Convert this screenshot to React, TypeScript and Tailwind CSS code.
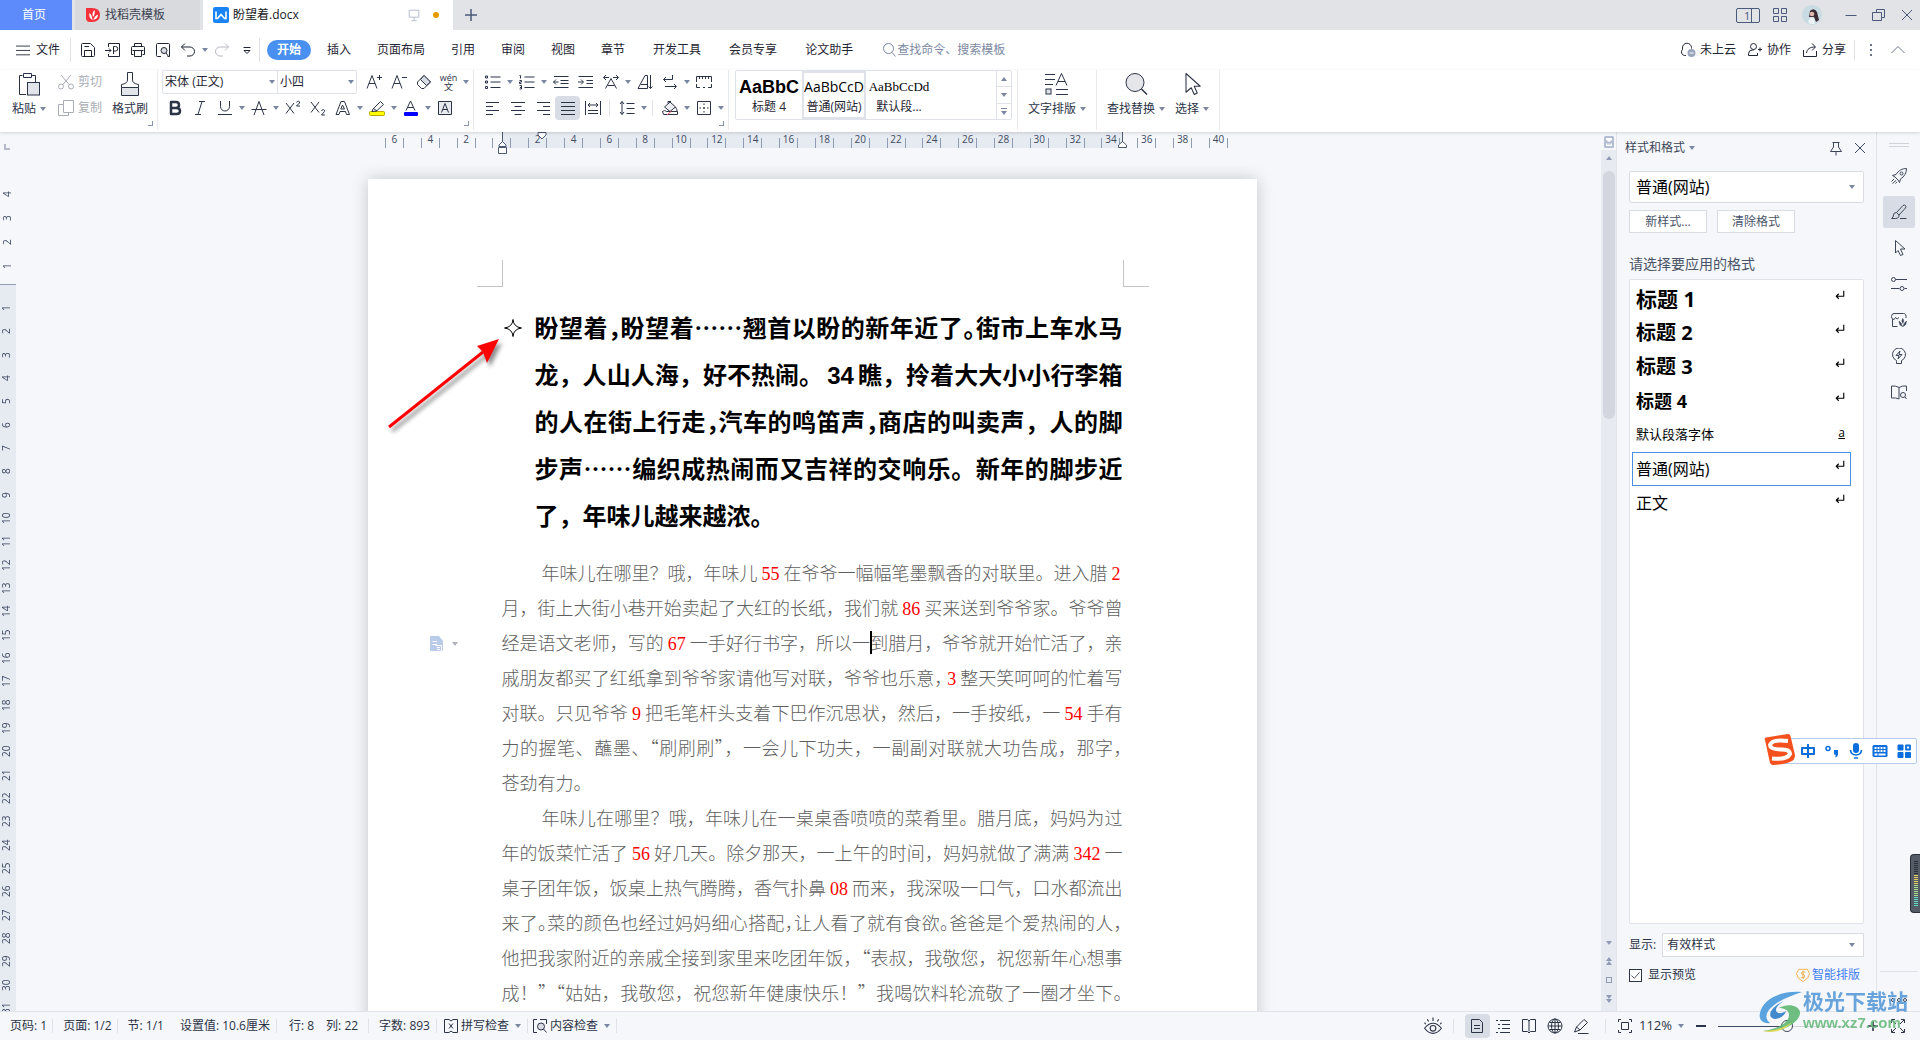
import { Fragment, useState } from 'react';
import type { ReactNode } from 'react';
import clsx from 'clsx';

const UI_FONT = "font-['Open_Sans','Noto_Sans_CJK_SC',sans-serif]";
const CJK_FONT = "font-['Noto_Sans_CJK_SC',sans-serif]";

// ---------------------------------------------------------------- icons

type IconProps = { d?: string; className?: string; children?: ReactNode };

function Icon({ d, className = 'size-4', children }: IconProps) {
  return (
    <svg
      viewBox="0 0 16 16"
      className={clsx('shrink-0', className)}
      fill="none"
      stroke="currentColor"
      strokeLinejoin="round"
      aria-hidden="true"
    >
      {d && <path d={d} />}
      {children}
    </svg>
  );
}

function Caret({ className = 'text-[#7a879f]' }: { className?: string }) {
  return (
    <svg viewBox="0 0 6 4" className={clsx('h-1 w-1.5 shrink-0', className)} fill="currentColor" aria-hidden="true">
      <path d="M0 0h6L3 4z" />
    </svg>
  );
}

const icons = {
  save: <Icon d="M1.500 2.500q0-1 1-1H10.500L14.500 5.500V13.500q0 1-1 1H2.500q-1 0-1-1zM4.500 14.500V8.500H11.500V14.500M4.500 4.500H9" />,
  exportPdf: <Icon d="M3.500 5V1.500H14.500V14.500H3.500V12M0 8.500H6M4 6.500L6 8.500L4 10.500M8.500 12V4.500H10.500a2 2 0 0 1 0 4.500H8.500" />,
  print: <Icon d="M4.500 4.500V1.500H11.500V4.500M3.500 12.500H1.500V5.500q0-1 1-1H13.500q1 0 1 1V12.500H12.500M4.500 8.500H11.500V14.500H4.500zM2.500 8.500H13.500" />,
  preview: (
    <Icon d="M6 14.500H2.500q-1 0-1-1V2.500q0-1 1-1H13.500q1 0 1 1V14.500H12.500">
      <circle cx="9" cy="8.500" r="3" fill="#d9dce2" />
      <path d="M11 11L13.500 14.500" />
    </Icon>
  ),
  undo: <Icon d="M5 1.500L1.500 5L5 8.500M1.500 5H10a4.500 4.500 0 0 1 0 9H7" />,
  redo: <Icon d="M11 1.500L14.500 5L11 8.500M14.500 5H6a4.500 4.500 0 0 0 0 9H9" />,
  customize: <Icon d="M4.500 5.500H11.500M5 8.500H11L8 11.500z" />,
  search: (
    <Icon>
      <circle cx="7.500" cy="6.500" r="5" />
      <path d="M11 10.500L14.500 14.500" />
    </Icon>
  ),
  cloud: (
    <Icon d="M6 13.500H4.500a3.500 3.500 0 0 1-2-6V6a4.500 4.500 0 0 1 9-.5v1">
      <circle cx="11.500" cy="11" r="4" fill="#9aa5bd" stroke="none" />
      <path d="M9.500 11H13.500" stroke="#fff" />
    </Icon>
  ),
  invite: (
    <Icon d="M7 8H5.500a4 4 0 0 0-4 4V13.500H10.500V11M11 7.500H15M13 5.500V9.500">
      <circle cx="6.500" cy="4.500" r="3" />
    </Icon>
  ),
  share: <Icon d="M1.500 8V14.500H14.500V9M4.500 11C5 7 8 5 13 5M10 1.500L13.500 5L10 8.500" />,
  chevronUp: <Icon d="M1.500 11L8 4.500L14.500 11" />,
  eraser: (
    <Icon d="M8 1.500L14.500 8L8 14.500H5.500L1.500 10.500V8z">
      <path d="M4.500 5.500L10.500 11.500L14.500 8L8 1.500z" fill="#d9dce2" />
    </Icon>
  ),
  italic: <Icon d="M7 1.500H13M3 14.500H9M10 1.500L6 14.500" />,
  underline: <Icon d="M3.500 1V6.500a4.500 4.500 0 0 0 9 0V1M1 14.500H15" />,
  strike: <Icon d="M3 15L8 1.500L13 15M0.500 9.500H15.500" />,
  sup: <Icon d="M1 3L9 13.500M9 3L1 13.500M11.500 2.500Q12 1 13.500 1.200Q15 1.500 14.500 3L11.500 6H15" />,
  sub: <Icon d="M1 2L9 12.500M9 2L1 12.500M11.500 11Q12 9.500 13.500 9.700Q15 10 14.500 11.500L11.500 15H15" />,
  outlineA: <Icon d="M1 14.500L6 1.500H9.500L14.500 14.500H11.500L10.500 11.500H5L4 14.500zM7.500 5L5.800 9H9.500z" />,
  highlight: (
    <Icon>
      <rect x="0.500" y="11.500" width="15" height="4" rx="1" fill="#ffff00" stroke="#b8a800" />
      <path d="M4 9L11.500 1.500L14.500 4.500L7.500 11L3 11.500zM4.500 8.500L8 11" fill="#fff" />
    </Icon>
  ),
  fontColor: (
    <Icon d="M3 10.500L7.500 1L12 10.500M4.500 7.500H10.500">
      <rect x="1" y="12" width="14" height="4" rx="1" fill="#0000ff" stroke="none" />
    </Icon>
  ),
  boxedA: (
    <Icon>
      <rect x="1.500" y="1.500" width="13" height="13" fill="#e8eaee" />
      <path d="M4.500 12.500L8 3.500L11.500 12.500M5.500 9.500H10.500" />
    </Icon>
  ),
  bullets: (
    <Icon d="M5.500 3H15.500M5.500 8H15.500M5.500 13.500H15.500">
      <rect x="0.500" y="2" width="2" height="2" />
      <rect x="0.500" y="7" width="2" height="2" />
      <rect x="0.500" y="12.500" width="2" height="2" />
    </Icon>
  ),
  numbers: <Icon d="M5.500 3H15.500M5.500 8H15.500M5.500 13.500H15.500M0.500 1.500H1.500V4.500M0.500 6.500H2.500V8H0.500V9.500H2.500M0.500 11.500H2.500V15H0.500M1 13.500H2.500" />,
  outdent: <Icon d="M1 2.500H15.500M7.500 6.500H15.500M7.500 9.500H15.500M1 13.500H15.500M5.500 8H0.500M3 5.500L0.500 8L3 10.500" />,
  indent: <Icon d="M0.500 2.500H15M8.500 6.500H15M8.500 9.500H15M0.500 13.500H15M0 8H5M3 5.500L5.500 8L3 10.500" />,
  charScale: <Icon d="M0.500 3.500H6M10 3.500H15.500M3 1L0.500 3.500L3 6M13 1L15.500 3.500L13 6M2.500 14.500L8 4.500L13.500 14.500M4.500 11.500H11.500" />,
  sort: <Icon d="M1 14.500L8 1.500H10.500V14.500M4 10.500H10.500M1 14.500H10.500M13.500 1V14.500M11.500 12.500L13.500 14.500L15.500 12.500" />,
  wrap: <Icon d="M10.500 1V5.500H1.500M4 3L1.500 5.500L4 8M3 12.500H14M12 10L14.500 12.500L12 15" />,
  tabStops: <Icon d="M0.500 8V2.500H15.500V8M3.500 2.500V5M6.500 2.500V5M9.500 2.500V5M12.500 2.500V5M0.500 10V13.500H4M7 13.500H9M12 13.500H15.500V10" />,
  alignLeft: <Icon d="M1 2.500H14M1 6.500H8M1 10.500H14M1 14.500H8" />,
  alignCenter: <Icon d="M1 2.500H15M4.500 6.500H11.500M1 10.500H15M4.500 14.500H11.500" />,
  alignRight: <Icon d="M2 2.500H15M8 6.500H15M2 10.500H15M8 14.500H15" />,
  justify: <Icon d="M1 2.500H15M1 6.500H15M1 10.500H15M1 14.500H15" />,
  distribute: <Icon d="M0.500 1V15M15.500 1V15M3 5H13M5 3L3 5L5 7M11 3L13 5L11 7M3 10.500H13M3 13.500H13" />,
  lineSpacing: <Icon d="M3 1.500V14.500M1 4L3 1.500L5 4M1 12L3 14.500L5 12M7.500 3.500H15.500M7.500 8.500H15.500M7.500 13.500H15.500" />,
  fill: (
    <Icon>
      <path d="M2.500 7L8 2L13.500 7L8 11.500z" fill="#eceef2" />
      <path d="M6 3.500V1.500H9M13.500 7Q15.500 10 15 11.500M0.500 11.500Q2.500 9.500 4.500 11.500H15.500V14.500H1.500z" />
      <path d="M5 15L9.500 11" stroke="#e35d5d" />
    </Icon>
  ),
  borders: <Icon d="M1.500 1.500H14.500V14.500H1.500zM8 3.500V5M8 7V9M8 11V12.500M3.500 8H5M7 8H9M11 8H12.500" />,
  pin: <Icon d="M4.500 2.500H11.500M5.500 2.500V7L2.500 11.500H13.500L10.500 7V2.500M8 11.500V15.500" />,
  close: <Icon d="M3 3L13 13M13 3L3 13" />,
  cursor: <Icon d="M4.500 0.500L14 9H9.500L12 14.500L9.500 15.500L7 10.500L4.500 13z" />,
};

const railIcons = [
  {
    label: '快速启动',
    icon: (
      <Icon>
        <path d="M15.500 .5C11 .5 7.500 2.500 5 6.500L1.500 7.500L4 9L7 12L8.500 14.500L9.500 11C13.500 8.500 15.500 5 15.500.5zM3 11L.500 13.500M5 12.500L1.500 15.500M6 14L4.500 15.500" />
        <circle cx="10.500" cy="5.500" r="1.500" />
      </Icon>
    ),
  },
  {
    label: '样式和格式',
    icon: <Icon d="M5.500 8.500L12 1.500Q13.500.500 14.500 1.500T14.500 4L8 11M5.500 8.500L8 11Q8.500 14 4.500 14.500H.500Q2.500 13.500 2.500 11T5.500 8.500zM9 14.500H15.500" />,
  },
  { label: '选择', icon: icons.cursor },
  {
    label: '属性',
    icon: (
      <Icon d="M4.500 3.500H16M0 12.500H8.500M13.500 12.500H16">
        <circle cx="2.500" cy="3.500" r="2" />
        <circle cx="11" cy="12.500" r="2" />
      </Icon>
    ),
  },
  {
    label: '素材',
    icon: (
      <Icon d="M1.500 7V14.500H6.500M1.500 7Q.5 6 .5 4.500Q.5 1.500 3 1.500H12.500Q15.500 1.500 15 6M1.500 7Q3.500 8.500 4.500 5.500Q6 8.500 8 5.500">
        <path d="M8 9Q10.500 10.500 11.500 14.500Q8 13.500 8 9zM15.500 9Q13 10.500 12 14.500Q15.500 13.500 15.500 9zM11.800 6.500Q13.500 8.500 11.800 11.500Q10 8.500 11.800 6.500z" fill="currentColor" strokeWidth="0.500" />
      </Icon>
    ),
  },
  {
    label: '帮助',
    icon: <Icon d="M5.500 13.500V12.500A6.500 6.500 0 1 1 10.500 12.500V15.500H5.500zM9 3L5 7.500H8L7 11L11 6.500H8z" />,
  },
  {
    label: '查阅',
    icon: (
      <Icon d="M8 3.500Q5 1.500 .5 2V14Q5 13.500 8 15M8 3.500Q11 1.500 15.500 2V7M8 3.500V15">
        <circle cx="12" cy="11" r="2.500" />
        <path d="M14 13L15.500 15" />
      </Icon>
    ),
  },
];

// ---------------------------------------------------------------- small controls

type ToolProps = { label: string; icon: ReactNode; caret?: boolean; active?: boolean; className?: string };

function Tool({ label, icon, caret, active, className }: ToolProps) {
  return (
    <button type="button" aria-label={label} className={clsx('flex h-6 items-center', className)}>
      <span className={clsx('flex h-6 w-[25px] items-center justify-center rounded-sm', active && 'bg-[#d8dde5]')}>{icon}</span>
      {caret && (
        <span className="flex w-[9px] justify-center">
          <Caret />
        </span>
      )}
    </button>
  );
}

function Divider({ className = 'h-6' }: { className?: string }) {
  return <span className={clsx('w-px shrink-0 bg-[#dfe2e8]', className)} />;
}

function GroupEnd({ className }: { className?: string }) {
  return (
    <div className={clsx('flex items-end', className)}>
      <span className="mb-1 size-[5px] border-r border-b border-[#8a94a8]" />
      <span className="ml-1 w-px self-stretch bg-[#e8eaee]" />
    </div>
  );
}

type SelectProps = { label: string; value: string; className?: string; selectClass?: string; caretClass?: string };

function Select({ label, value, className, selectClass, caretClass = 'right-2' }: SelectProps) {
  return (
    <div className={clsx('relative flex items-center', className)}>
      <select aria-label={label} defaultValue={value} className={clsx('h-full w-full appearance-none bg-transparent outline-none', selectClass)}>
        <option>{value}</option>
      </select>
      <span className={clsx('pointer-events-none absolute', caretClass)}>
        <Caret />
      </span>
    </div>
  );
}

// ---------------------------------------------------------------- top bars

function TitleBar() {
  return (
    <header className="flex h-[30px] shrink-0 items-stretch bg-[#e1e3e7]">
      <button type="button" className="w-[72px] bg-[#5e8bfb] pr-1 text-white">
        首页
      </button>
      <button type="button" className="ml-[3px] flex w-[125px] items-center gap-1 bg-[#d8dadd] pl-2.5 text-[#3c4250]">
        <svg viewBox="0 0 16 16" className="size-4" aria-hidden="true">
          <path d="M1 1h6q8 0 8 7t-8 7h-2q-4 0-4-4z" fill="#f5313b" />
          <path d="M7.500 13C4 11 4 8 4.500 6Q7 8 7.500 13zM8 10Q6.500 6 9.500 3Q10.500 7 8 10zM8.500 13Q9 9 13 7.500Q13 11.500 8.500 13z" fill="#fff" />
        </svg>
        找稻壳模板
      </button>
      <button type="button" className="ml-[3px] flex w-[250px] items-center gap-1 bg-white pr-3.5 pl-2.5 text-[#16181d]">
        <svg viewBox="0 0 16 16" className="size-4" aria-hidden="true">
          <rect width="16" height="16" rx="2" fill="#1a84f7" />
          <path d="M3 4.500V11.500H4.500L8 7.500L11.500 11.500H13V4.500" fill="none" stroke="#fff" strokeWidth="1.600" />
        </svg>
        <span className="flex-1 text-left">盼望着.docx</span>
        <Icon className="mr-2 size-3.5 text-[#aab3c6]" d="M2.500 2.500H13.500V10.500H2.500zM8 10.500V14M5 14.500H11" />
        <span className="size-1.5 rounded-full bg-[#e69b05]" />
      </button>
      <button type="button" aria-label="新建" className="px-3 text-[#4b5a7a]">
        <svg viewBox="0 0 12 12" className="size-3" stroke="currentColor" strokeWidth="1.500" aria-hidden="true">
          <path d="M6 0V12M0 6H12" />
        </svg>
      </button>
      <div className="ml-auto flex items-center pr-[5px] text-[#4b5a7a]">
        <button type="button" aria-label="窗口" className="flex h-[15px] w-6 items-center justify-between rounded-xs border border-current pl-[7px] text-[11px] leading-none">
          1<span className="h-full w-2 border-l border-current" />
        </button>
        <button type="button" aria-label="应用" className="ml-3">
          <Icon d="M1.500 1.500H6.500V6.500H1.500zM9.500 1.500H14.500V6.500H9.500zM1.500 9.500H6.500V14.500H1.500zM9.500 9.500H14.500V14.500H9.500z" />
        </button>
        <button type="button" aria-label="账户" className="ml-3.5">
          <svg viewBox="0 0 20 20" className="size-5" aria-hidden="true">
            <circle cx="10" cy="10" r="10" fill="#c9dbe2" />
            <path d="M8 6Q12 2 15 7L17 15L14 17L12 12L7 12Z" fill="#3b2a33" />
            <circle cx="10" cy="9" r="2.300" fill="#e3b9ab" />
            <path d="M6 17Q8 11 12 13L13 19H8z" fill="#edf3f5" />
          </svg>
        </button>
        <Divider className="mx-2.5 h-5" />
        <button type="button" aria-label="最小化">
          <Icon d="M2.500 8.500H13.500" />
        </button>
        <button type="button" aria-label="还原" className="ml-3">
          <Icon d="M1.500 5.500H10.500V13.500H1.500zM5.500 5.500V2.500H13.500V10.500H10.500" />
        </button>
        <button type="button" aria-label="关闭" className="ml-3">
          {icons.close}
        </button>
      </div>
    </header>
  );
}

function MenuBar() {
  return (
    <nav className="flex h-10 shrink-0 items-center bg-white pr-3.5 pl-4 text-[#1f2533]">
      <button type="button" className="flex w-[54px] items-center gap-1.5">
        <Icon className="size-3.5" d="M0 3.500H16M0 8.500H16M0 13.500H16" />
        文件
      </button>
      <Divider />
      <div className="flex pl-1">
        <Tool label="保存" icon={icons.save} />
        <Tool label="输出为PDF" icon={icons.exportPdf} />
        <Tool label="打印" icon={icons.print} />
        <Tool label="打印预览" icon={icons.preview} />
        <Tool label="撤销" icon={icons.undo} caret />
        <Tool label="恢复" icon={icons.redo} className="text-[#b6bac2]" />
        <Tool label="自定义" icon={icons.customize} />
      </div>
      <Divider />
      <button type="button" className="ml-[7px] h-5 w-11 rounded-full bg-[#4a90f0] font-bold text-white">
        开始
      </button>
      <div className="flex gap-[26px] pl-4">
        {['插入', '页面布局', '引用', '审阅', '视图', '章节'].map((tab) => (
          <button key={tab} type="button">
            {tab}
          </button>
        ))}
      </div>
      <div className="flex gap-7 pl-7">
        {['开发工具', '会员专享', '论文助手'].map((tab) => (
          <button key={tab} type="button">
            {tab}
          </button>
        ))}
      </div>
      <label className="ml-7 flex items-center text-[#7c89a3]">
        {icons.search}
        <input
          aria-label="查找命令、搜索模板"
          placeholder="查找命令、搜索模板"
          className="w-32 bg-transparent outline-none placeholder:text-[#7c89a3]"
        />
      </label>
      <div className="ml-auto flex items-center gap-[11px]">
        <button type="button" className="flex items-center gap-1">
          {icons.cloud}未上云
        </button>
        <button type="button" className="flex items-center gap-1">
          {icons.invite}协作
        </button>
        <button type="button" className="flex items-center gap-1">
          {icons.share}分享
        </button>
      </div>
      <Divider className="mx-2 h-5" />
      <div className="flex gap-[11px] text-[#6b7488]">
        <button type="button" aria-label="更多">
          <Icon>
            <path d="M7 2h2v2H7zM7 7h2v2H7zM7 12h2v2H7z" fill="currentColor" stroke="none" />
          </Icon>
        </button>
        <button type="button" aria-label="收起功能区">
          {icons.chevronUp}
        </button>
      </div>
    </nav>
  );
}

function BigTool({ label, icon, caret }: { label: string; icon: ReactNode; caret?: boolean }) {
  return (
    <button type="button" className="flex flex-col items-center gap-1">
      <span className="flex h-[27px] items-center">{icon}</span>
      <span className="flex items-center gap-1">
        {label}
        {caret && <Caret />}
      </span>
    </button>
  );
}

function Ribbon() {
  return (
    <div className="relative z-10 flex h-[62px] shrink-0 bg-white pb-0.5 text-[#2b3347] shadow-[0_1px_3px_rgba(0,0,0,0.15)]">
      <div className="flex items-start pl-3">
        <BigTool
          label="粘贴"
          caret
          icon={
            <svg viewBox="0 0 22 24" className="h-6 w-[22px]" fill="none" stroke="currentColor" aria-hidden="true">
              <path d="M8 22.500H1.500V3.500H4.500M14 3.500H17.500V10M5.500 1.500H13.500V5.500H5.500z" />
              <rect x="9.500" y="10.500" width="12" height="12.500" fill="#e1e4e9" />
            </svg>
          }
        />
        <div className="ml-3 flex flex-col gap-0.5 text-[#a9adb5]">
          <button type="button" className="flex h-6 items-center gap-1">
            <Icon d="M3 1L11.500 11M13 1L4.500 11">
              <circle cx="3" cy="12.500" r="2.500" />
              <circle cx="13" cy="12.500" r="2.500" />
            </Icon>
            剪切
          </button>
          <button type="button" className="flex h-6 items-center gap-1">
            <Icon d="M5.500 0.500H15.500V12.500H5.500zM5.500 4.500H0.500V15.500H10.500V12.500" />
            复制
          </button>
        </div>
        <div className="ml-2.5">
          <BigTool
            label="格式刷"
            icon={
              <svg viewBox="0 0 20 24" className="h-6 w-5" fill="none" stroke="currentColor" aria-hidden="true">
                <path d="M1.500 15.500H18.500V23.500H1.500z" fill="#e1e4e9" />
                <path d="M1.500 15.500V12.500Q7.500 11.500 7.500 8V.5H12.500V8Q12.500 11.500 18.500 12.500V15.500" />
              </svg>
            }
          />
        </div>
      </div>
      <GroupEnd />

      <div className="flex flex-col gap-0.5 pl-1">
        <div className="flex gap-1">
          <div className="flex h-6 w-[195px] rounded-xs border border-[#dfe2e8] text-[#1f2533]">
            <Select label="字体" value="宋体 (正文)" className="w-[115px] border-r border-[#dfe2e8]" selectClass="pl-0.5" caretClass="right-0.5" />
            <Select label="字号" value="小四" className="flex-1" selectClass="pl-0.5" caretClass="right-0.5" />
          </div>
          <div className="flex">
            <Tool label="增大字号" icon={<Icon d="M1 14.500L6 1.500L11 14.500M3 9.500H9M11 3.500H16M13.500 1V6" />} />
            <Tool label="减小字号" icon={<Icon d="M1 14.500L6 1.500L11 14.500M3 9.500H9M11 3.500H16" />} />
            <Tool label="清除格式" icon={icons.eraser} />
            <Tool
              label="拼音指南"
              caret
              icon={
                <span className="flex flex-col items-center">
                  <span className="text-[9px] leading-[9px]">wén</span>
                  <span className="text-[9px] leading-[9px]">文</span>
                </span>
              }
            />
          </div>
        </div>
        <div className="flex">
          <Tool label="加粗" icon={<Icon className="size-4 stroke-[2.500]" d="M4 2H9Q12 2 12 5T9 8H4zM4 8H9.500Q13 8 13 11T9.500 14H4z" />} />
          <Tool label="倾斜" icon={icons.italic} />
          <Tool label="下划线" icon={icons.underline} caret />
          <Tool label="删除线" icon={icons.strike} caret />
          <Tool label="上标" icon={icons.sup} />
          <Tool label="下标" icon={icons.sub} />
          <Tool label="文字效果" icon={icons.outlineA} caret />
          <Tool label="突出显示" icon={icons.highlight} caret />
          <Tool label="字体颜色" icon={icons.fontColor} caret />
          <Tool label="字符底纹" icon={icons.boxedA} />
        </div>
      </div>
      <GroupEnd className="-ml-1.5" />

      <div className="flex flex-col gap-0.5 pl-1.5">
        <div className="flex">
          <Tool label="项目符号" icon={icons.bullets} caret />
          <Tool label="编号" icon={icons.numbers} caret />
          <Tool label="减少缩进" icon={icons.outdent} />
          <Tool label="增加缩进" icon={icons.indent} />
          <Tool label="中文版式" icon={icons.charScale} caret />
          <Tool label="排序" icon={icons.sort} />
          <Tool label="显示标记" icon={icons.wrap} caret />
          <Tool label="制表位" icon={icons.tabStops} />
        </div>
        <div className="flex items-center">
          <Tool label="左对齐" icon={icons.alignLeft} />
          <Tool label="居中对齐" icon={icons.alignCenter} />
          <Tool label="右对齐" icon={icons.alignRight} />
          <Tool label="两端对齐" icon={icons.justify} active />
          <Tool label="分散对齐" icon={icons.distribute} />
          <Divider className="mx-1 h-4" />
          <Tool label="行距" icon={icons.lineSpacing} caret />
          <Divider className="mx-1 h-4" />
          <Tool label="底纹颜色" icon={icons.fill} caret />
          <Tool label="边框" icon={icons.borders} caret />
        </div>
      </div>
      <GroupEnd className="-ml-1.5" />

      <div className="ml-1.5 flex h-[50px] w-[277px] rounded-xs border border-[#dfe2e8] text-[#1f2533]">
        <button type="button" className="flex w-[66px] flex-col items-center justify-between overflow-hidden py-1">
          <span className="font-['Liberation_Sans',sans-serif] text-lg leading-6 font-bold text-black">AaBbC</span>
          <span className="leading-4">标题 4</span>
        </button>
        <button type="button" className="flex w-16 flex-col items-center justify-between overflow-hidden border-2 border-[#dfe2e8] py-0.5">
          <span className="w-[60px] overflow-hidden text-sm leading-6 text-black">AaBbCcDd</span>
          <span className="leading-4">普通(网站)</span>
        </button>
        <button type="button" className="flex w-[66px] flex-col items-center justify-between overflow-hidden py-1">
          <span className="font-['Liberation_Serif',serif] text-[13px] leading-6 text-black">AaBbCcDd</span>
          <span className="leading-4">默认段...</span>
        </button>
        <div className="ml-auto flex w-[15px] flex-col divide-y divide-[#dfe2e8] border-l border-[#dfe2e8]">
          <button type="button" aria-label="上一行" className="flex flex-1 items-center justify-center">
            <span className="rotate-180"><Caret /></span>
          </button>
          <button type="button" aria-label="下一行" className="flex flex-1 items-center justify-center">
            <Caret />
          </button>
          <button type="button" aria-label="更多样式" className="flex flex-1 flex-col items-center justify-center gap-0.5">
            <span className="h-px w-1.5 bg-[#7a879f]" />
            <Caret />
          </button>
        </div>
      </div>

      <div className="ml-[5px] flex divide-x divide-[#e8eaee] border-x border-[#e8eaee]">
        <div className="w-[79px] pl-2.5">
          <BigTool
            label="文字排版"
            caret
            icon={
              <svg viewBox="0 0 24 24" className="size-6" fill="none" stroke="currentColor" aria-hidden="true">
                <path d="M0 2.500H10M0 7.500H10M0 12.500H8M11 13.500L16.500 1.500L22 13.500M13 9.500H20M11 17.500H23M11 22.500H23" />
                <rect x="1" y="17" width="5" height="5" fill="#e1e4e9" />
              </svg>
            }
          />
        </div>
        <div className="flex gap-2.5 pr-2.5 pl-2.5">
          <BigTool
            label="查找替换"
            caret
            icon={
              <svg viewBox="0 0 24 24" className="size-6" fill="none" stroke="currentColor" aria-hidden="true">
                <circle cx="11" cy="10.500" r="9" fill="#e4e6ea" />
                <path d="M17.500 17L23 22.500" strokeWidth="1.500" />
              </svg>
            }
          />
          <BigTool label="选择" caret icon={<Icon className="size-6 stroke-[0.700]" d="M4 1L13.500 9.500H9.500L11.500 14L9.500 15L7.500 10.500L4 13.500z" />} />
        </div>
      </div>
    </div>
  );
}

// ---------------------------------------------------------------- document

const rulerMarks = ['6', '4', '2', '', ...Array.from({ length: 20 }, (_, i) => String(2 * (i + 1)))];

function HorizontalRuler() {
  return (
    <div className="flex h-4 shrink-0 justify-center pr-1">
      <div className="relative flex w-[860px]">
        <span className="absolute inset-y-0 right-[115px] left-[125px] bg-[#e6eaf1]" />
        {rulerMarks.map((mark, i) => (
          <span key={i} className="relative flex flex-1 justify-center">
            <span className="mt-1.5 h-2.5 w-[19px] border-x border-[#8f9bb0]" />
            <span className="absolute top-px text-[10px] leading-3 text-[#3d4a63]">{mark}</span>
          </span>
        ))}
        <svg viewBox="0 0 12 22" className="absolute top-0 left-[119px] h-[22px] w-3" fill="#fff" stroke="#4d5a73" aria-hidden="true">
          <path d="M6.500 0V10M3 14.500V13L6.500 9.500L10 13V14.500zM2.500 15.500H10.500V21.500H2.500z" />
        </svg>
        <svg viewBox="0 0 10 8" className="absolute top-0 left-40 h-2 w-2.5" fill="#fff" stroke="#4d5a73" aria-hidden="true">
          <path d="M1 .5H9V3L5 7L1 3z" />
        </svg>
        <svg viewBox="0 0 12 22" className="absolute top-0 right-[109px] h-[22px] w-3" fill="#fff" stroke="#4d5a73" aria-hidden="true">
          <path d="M6.500 0V10M2.500 15.500V13L6.500 9.500L10.500 13V15.500z" />
        </svg>
      </div>
    </div>
  );
}

function VerticalRuler() {
  return (
    <div className="flex w-4 shrink-0 flex-col overflow-hidden text-[10px] text-[#3d4a63]">
      <span className="mt-3 ml-1 size-1.5 shrink-0 border-b-2 border-l-2 border-[#b3bac8]" />
      <div className="mt-8 flex h-[103px] shrink-0 flex-col border-b border-[#8f9bb0]">
        {[4, 3, 2, 1].map((n) => (
          <span key={n} className="flex h-6 rotate-180 items-center justify-center [writing-mode:vertical-rl]">
            {n}
          </span>
        ))}
      </div>
      <div className="flex-1 overflow-hidden bg-[#e6eaf1] pt-3">
        {Array.from({ length: 31 }, (_, i) => i + 1).map((n) => (
          <span
            key={n}
            className={clsx('flex rotate-180 items-center justify-center [writing-mode:vertical-rl]', n % 3 ? 'h-[23px]' : 'h-6')}
          >
            {n}
          </span>
        ))}
      </div>
    </div>
  );
}

// In the lines below "_" after a punctuation mark selects its half-width form, "|" is the text cursor.
const headingLines = [
  '盼望着，_盼望着……翘首以盼的新年近了。_街市上车水马',
  '龙，人山人海，好不热闹。34瞧，拎着大大小小行李箱',
  '的人在街上行走，_汽车的鸣笛声，_商店的叫卖声，人的脚',
  '步声……编织成热闹而又吉祥的交响乐。新年的脚步近',
  '了，年味儿越来越浓。',
];

const bodyParagraphs = [
  [
    '年味儿在哪里？哦，年味儿55在爷爷一幅幅笔墨飘香的对联里。进入腊2',
    '月，街上大街小巷开始卖起了大红的长纸，我们就86买来送到爷爷家。爷爷曾',
    '经是语文老师，写的67一手好行书字，所以一|到腊月，爷爷就开始忙活了，亲',
    '戚朋友都买了红纸拿到爷爷家请他写对联，爷爷也乐意，_3整天笑呵呵的忙着写',
    '对联。只见爷爷9把毛笔杆头支着下巴作沉思状，然后，一手按纸，一54手有',
    '力的握笔、蘸墨、“刷刷刷”，一会儿下功夫，一副副对联就大功告成，那字，_',
    '苍劲有力。',
  ],
  [
    '年味儿在哪里？哦，年味儿在一桌桌香喷喷的菜肴里。腊月底，妈妈为过',
    '年的饭菜忙活了56好几天。除夕那天，一上午的时间，妈妈就做了满满342一',
    '桌子团年饭，饭桌上热气腾腾，香气扑鼻08而来，我深吸一口气，口水都流出',
    '来了。_菜的颜色也经过妈妈细心搭配，_让人看了就有食欲。_爸爸是个爱热闹的人，_',
    '他把我家附近的亲戚全接到家里来吃团年饭，“表叔，我敬您，祝您新年心想事',
    '成！”“姑姑，我敬您，祝您新年健康快乐！”我喝饮料轮流敬了一圈才坐下。_',
  ],
];

function Line({ text, numberClass, className }: { text: string; numberClass: string; className?: string }) {
  return (
    <span className={clsx('block whitespace-nowrap', className)}>
      {text.split(/(\d+|[，。]_|\|)/).map((part, i) => {
        if (/^\d/.test(part)) return <span key={i} className={clsx('mx-1 leading-none', numberClass)}>{part}</span>;
        if (part === '|')
          return (
            <span key={i} className="relative">
              <span className="absolute top-0.5 left-0 h-[23px] w-0.5 bg-black" />
            </span>
          );
        if (part.endsWith('_')) return <span key={i} className="[font-feature-settings:'halt']">{part[0]}</span>;
        return <Fragment key={i}>{part}</Fragment>;
      })}
    </span>
  );
}

function Page() {
  return (
    <article
      lang="zh-CN"
      className={clsx('relative h-[1257px] w-[889px] shrink-0 bg-white px-[134px] pt-[124px] shadow-[0_0_16px_rgba(0,0,0,0.2)]', CJK_FONT)}
    >
      <span className="absolute top-[81px] left-[109px] h-[27px] w-[26px] border-r border-b border-[#c3c3c3]" />
      <span className="absolute top-[81px] right-[108px] h-[27px] w-[26px] border-b border-l border-[#c3c3c3]" />
      <h1 className="relative pl-[33px] text-2xl leading-[47px] font-bold text-black">
        <svg viewBox="0 0 18 18" className="absolute top-4 left-0.5 size-[18px]" fill="none" stroke="#000" aria-hidden="true">
          <path d="M9 .5Q9.500 8 17.500 9Q9.500 10 9 17.500Q8.500 10 .5 9Q8.500 8 9 .5z" />
        </svg>
        {headingLines.map((line, i) => (
          <Line
            key={line}
            text={line}
            numberClass="font-['Liberation_Sans',sans-serif]"
            className={i < headingLines.length - 1 ? '[text-align-last:justify]' : undefined}
          />
        ))}
      </h1>
      <div className="relative mt-[17px] text-lg leading-[35px] font-light text-[#606060]">
        <button type="button" aria-label="粘贴选项" className="absolute top-[81px] -left-[72px] flex items-center gap-2">
          <svg viewBox="0 0 14 16" className="h-4 w-3.5" aria-hidden="true">
            <path d="M0 0H9L13 5V15H0z" fill="#b9cbe8" />
            <path d="M2.500 5.500H7M2.500 8.500H7M5.500 9.500H11.500V15.500M7 11.500H10M7 13.500H10" stroke="#fff" fill="none" />
          </svg>
          <Caret className="text-[#b0b4ba]" />
        </button>
        {bodyParagraphs.map((lines) => (
          <p key={lines[1]}>
            {lines.map((line, i) => (
              <Line
                key={line}
                text={line}
                numberClass="font-['Liberation_Serif',serif] text-[#ff0000]"
                className={clsx(i === 0 && 'pl-10', line.length > 10 && '[text-align-last:justify]')}
              />
            ))}
          </p>
        ))}
      </div>
      {/* arrow pointing at the bullet */}
      <svg viewBox="0 0 130 110" className="absolute top-[152px] left-[15px] h-[110px] w-[130px] drop-shadow-[3px_4px_2px_rgba(0,0,0,0.45)]" aria-hidden="true">
        <path d="M6 96L100 21" stroke="#f00" strokeWidth="3" />
        <path d="M116 8L94 15L100 21L104 32z" fill="#f00" />
      </svg>
    </article>
  );
}

function ScrollBar() {
  return (
    <div className="flex w-[15px] shrink-0 flex-col items-center text-[#8f9ab3]">
      <button type="button" aria-label="标尺" className="mt-1 mb-0.5">
        <svg viewBox="0 0 10 12" className="h-3 w-2.5" aria-hidden="true">
          <rect width="10" height="12" rx="1.500" fill="#b3bdd3" />
          <path d="M2 2H8V4L5 6L2 4zM2 10V7.500H3.500V9H4.500V7.500H5.500V9H6.500V7.500H8V10z" fill="#fff" />
        </svg>
      </button>
      <div className="flex w-full flex-1 flex-col items-center bg-[#e7eaf0] pt-1.5 pb-2">
        <span className="rotate-180"><Caret className="text-[#8f9ab3]" /></span>
        <span className="mt-[11px] h-[248px] w-3 rounded-full bg-[#d3d6de]" />
        <div className="mt-auto flex flex-col items-center gap-3">
          <Caret className="text-[#8f9ab3]" />
          <span className="flex rotate-180 flex-col"><Caret className="text-[#8f9ab3]" /><Caret className="text-[#8f9ab3]" /></span>
          <span className="size-1.5 border border-current" />
          <span className="flex flex-col"><Caret className="text-[#8f9ab3]" /><Caret className="text-[#8f9ab3]" /></span>
        </div>
      </div>
    </div>
  );
}

// ---------------------------------------------------------------- side panel

const styleItems = [
  { name: '标题 1', text: 'text-[21px] font-bold' },
  { name: '标题 2', text: 'text-xl font-bold' },
  { name: '标题 3', text: 'text-xl font-bold' },
  { name: '标题 4', text: 'text-lg font-bold' },
  { name: '默认段落字体', text: 'text-[13px]', char: true },
  { name: '普通(网站)', text: 'text-base' },
  { name: '正文', text: 'text-base' },
];

function StylePanel() {
  const [selected, setSelected] = useState('普通(网站)');
  const [showPreview, setShowPreview] = useState(true);

  return (
    <aside className="flex w-[261px] shrink-0 flex-col border-x border-[#e0e3e8] px-3 text-[#3d4659]">
      <div className="-mx-1 flex h-[39px] items-center pb-2">
        <button type="button" className="flex items-center gap-1">
          样式和格式
          <Caret />
        </button>
        <button type="button" aria-label="固定" className="ml-auto">{icons.pin}</button>
        <button type="button" aria-label="关闭面板" className="ml-2">{icons.close}</button>
      </div>
      <Select
        label="当前样式"
        value="普通(网站)"
        className="h-8 w-full shrink-0 rounded-xs border border-[#d9dce3] bg-white"
        selectClass="pl-1.5 text-base text-black"
      />
      <div className="mt-[7px] flex gap-2.5 text-[#4a5468]">
        <button type="button" className="h-[23px] w-[78px] border border-[#d9dce3] bg-white">新样式...</button>
        <button type="button" className="h-[23px] w-[78px] border border-[#d9dce3] bg-white">清除格式</button>
      </div>
      <h2 className="mt-5 text-sm leading-[21px] text-[#4a5468]">请选择要应用的格式</h2>
      <ul className="mt-[5px] flex-1 rounded-xs border border-[#dfe2e8] bg-white pt-0.5 pr-3 pl-0.5">
        {styleItems.map((item) => (
          <li key={item.name}>
            <button
              type="button"
              onClick={() => setSelected(item.name)}
              className={clsx(
                'flex h-[34px] w-full items-center justify-between border pr-[5px] pl-[3px] text-black',
                selected === item.name ? 'border-[#4a90e2]' : 'border-transparent',
              )}
            >
              <span className={item.text}>{item.name}</span>
              {item.char ? (
                <span className="pb-1 leading-4 underline">a</span>
              ) : (
                <Icon className="mb-2 size-2.5 stroke-[1.800]" d="M14 1V10H2M6 6L2 10L6 14" />
              )}
            </button>
          </li>
        ))}
      </ul>
      <div className="mt-[9px] flex items-center gap-1.5 text-[#2b3347]">
        <span>显示:</span>
        <Select label="显示" value="有效样式" className="h-6 flex-1 border border-[#d9dce3] bg-white" selectClass="pl-1 text-[#2b3347]" />
      </div>
      <div className="mt-2.5 mb-7 flex items-center justify-between">
        <label className="relative flex items-center gap-1.5 text-[#2b3347]">
          <input
            type="checkbox"
            checked={showPreview}
            onChange={(e) => setShowPreview(e.target.checked)}
            className="size-[13px] appearance-none border border-[#2b3347] bg-white"
          />
          {showPreview && <Icon className="pointer-events-none absolute left-0 size-[13px]" d="M3 8L6.500 11.500L13 4" />}
          显示预览
        </label>
        <a href="#layout" className="mr-1 flex items-center gap-0.5 text-[#3f7df0]">
          <Icon className="size-3.5 text-[#f2a93b]" d="M3 1.500H13L15.500 6.500Q15 12 8 15.500Q1 12 .5 6.500zM10.500 4.500H7Q5.500 6 7 7.500H9Q11 9 9 11H5.500M8 3V12.500" />
          智能排版
        </a>
      </div>
    </aside>
  );
}

function Rail() {
  return (
    <div className="flex w-[43px] shrink-0 flex-col items-center text-[#3d4659]">
      <span className="mt-[11px] h-1 w-5 shrink-0 border-y border-[#cfd3da]" />
      <div className="mt-[13px] flex flex-col gap-1">
        {railIcons.map((item, i) => (
          <button
            key={item.label}
            type="button"
            aria-label={item.label}
            className={clsx('flex size-8 items-center justify-center rounded-xs', i === 1 && 'bg-[#d8dde5]')}
          >
            {item.icon}
          </button>
        ))}
      </div>
      <div className="mt-auto flex h-10 w-[38px] justify-center border-t border-[#dfe2e8] pt-4">
        <button type="button" aria-label="更多工具">
          <Icon>
            <circle cx="2" cy="8" r="1.500" />
            <circle cx="8" cy="8" r="1.500" />
            <circle cx="14" cy="8" r="1.500" />
          </Icon>
        </button>
      </div>
    </div>
  );
}

// ---------------------------------------------------------------- status bar

function StatusBar() {
  const [zoom, setZoom] = useState(50);

  return (
    <footer className="flex h-[29px] shrink-0 items-center border-t border-[#dfe2e8] bg-[#f5f7fa] pl-2.5 text-[#2b3347]">
      <span>页码: 1</span>
      <Divider className="mr-2.5 ml-[5px] h-3.5" />
      <span>页面: 1/2</span>
      <Divider className="mr-2.5 ml-[5px] h-3.5" />
      <span>节: 1/1</span>
      <span className="ml-4">设置值: 10.6厘米</span>
      <Divider className="mr-3 ml-1.5 h-3.5" />
      <span>行: 8</span>
      <span className="ml-3">列: 22</span>
      <Divider className="mx-2.5 h-3.5" />
      <span>字数: 893</span>
      <Divider className="mx-1.5 h-3.5" />
      <button type="button" className="flex items-center gap-0.5">
        <Icon d="M6 1.500H1.500V14.500H6M10 1.500H14.500V14.500H10M6 1.500L8 3L10 1.500M6 14.500L8 13L10 14.500M6 5.500L10 10.500M10 5.500L6 10.500" />
        拼写检查
        <span className="ml-1"><Caret /></span>
      </button>
      <Divider className="mr-1 ml-1.5 h-3.5" />
      <button type="button" className="flex items-center gap-0.5">
        <Icon d="M5 1.500H1.500V14.500H5M8 1.500H14.500V6">
          <circle cx="9" cy="8.500" r="3.500" fill="#d9dce2" />
          <path d="M11.500 11L14.500 14.500" />
        </Icon>
        内容检查
        <span className="ml-1"><Caret /></span>
      </button>
      <Divider className="ml-1.5 h-3.5" />

      <div className="ml-auto flex items-center pr-3.5">
        <button type="button" aria-label="护眼模式">
          <Icon className="size-[18px]" d="M.5 10Q4 5.500 8 5.500T15.500 10Q12 14.500 8 14.500T.5 10zM8 3.500V.500M4 4L3 2M12 4L13 2M1.500 6.500L.500 5M14.500 6.500L15.500 5">
            <circle cx="8" cy="10" r="2.500" />
          </Icon>
        </button>
        <Divider className="mx-[11px] h-3.5" />
        <div className="flex items-center gap-px">
          <Tool label="页面视图" active icon={<Icon d="M2.500 1.500H10.500L13.500 4.500V14.500H2.500zM5 7.500H11M5 10.500H11" />} />
          <Tool label="大纲" icon={<Icon d="M1 2.500H3M5 2.500H15M3 6.500H5M7 6.500H15M3 10.500H5M7 10.500H15M1 14.500H3M5 14.500H15" />} />
          <Tool label="阅读版式" icon={<Icon d="M8 3L6.500 1.500H1.500V13.500H6.500L8 15L9.500 13.500H14.500V1.500H9.500L8 3V13.500" />} />
          <Tool
            label="Web版式"
            icon={
              <Icon d="M1.500 8H14.500M2.500 4.500H13.500M2.500 11.500H13.500M8 1V15">
                <circle cx="8" cy="8" r="7" />
                <ellipse cx="8" cy="8" rx="3.500" ry="7" />
              </Icon>
            }
          />
          <Tool label="写作模式" icon={<Icon d="M1.500 14L3.500 9L11 1.500L14.500 4.500L7 12zM3.500 9L7 12M5 15.500H15.500" />} />
        </div>
        <Divider className="mx-[11px] h-3.5" />
        <button type="button" aria-label="显示比例" className="flex items-center gap-1.5">
          <Icon d="M1.500 4V1.500H4M12 1.500H14.500V4M14.500 12V14.500H12M4 14.500H1.500V12M4.500 4.500H11.500V11.500H4.500z" />
          <span className="text-[13px]">112%</span>
          <Caret />
        </button>
        <button type="button" aria-label="缩小" className="ml-3 h-0.5 w-2.5 bg-[#2b3347]" />
        <input
          type="range"
          aria-label="缩放"
          value={zoom}
          onChange={(e) => setZoom(Number(e.target.value))}
          className="mx-3 h-px w-[138px] appearance-none bg-linear-to-r from-[#3d4a66] from-50% to-[#cfd3da] to-50% [&::-webkit-slider-thumb]:size-3 [&::-webkit-slider-thumb]:appearance-none [&::-webkit-slider-thumb]:rounded-full [&::-webkit-slider-thumb]:border [&::-webkit-slider-thumb]:border-[#3d4659] [&::-webkit-slider-thumb]:bg-white"
        />
        <button type="button" aria-label="放大">
          <Icon className="size-2.5 stroke-[2.500]" d="M8 0V16M0 8H16" />
        </button>
        <button type="button" aria-label="全屏" className="ml-3">
          <Icon d="M1.500 5V1.500H5M11 1.500H14.500V5M14.500 11V14.500H11M5 14.500H1.500V11M2 2L6 6M14 2L10 6M2 14L6 10M14 14L10 10" />
        </button>
      </div>
    </footer>
  );
}

// ---------------------------------------------------------------- floating windows

function InputMethodBar() {
  return (
    <div className="absolute top-[738px] right-[3px] z-20 flex h-[26px] w-[146px] items-center justify-between rounded-xs border border-[#b4cbea] bg-white pr-1 pl-7 text-[#0a6fdc]">
      <svg viewBox="0 0 32 32" className="absolute -top-[5px] -left-2 size-8" aria-hidden="true">
        <path d="M1 6Q0 4 2 3.500L24 0Q26 0 26.500 2L31 21Q31 25 28 27Q20 31 9 31Q7 31 6 29z" fill="#f4511e" />
        <path d="M24 7Q8 5 6 11Q6 15 16 15.500Q26 15 26 20Q23 26 8 24.500" fill="none" stroke="#fff" strokeWidth="4" />
      </svg>
      <button type="button" aria-label="中文">
        <Icon className="size-4 stroke-2" d="M2 5H14V11H2zM8 1V15" />
      </button>
      <button type="button" aria-label="中文标点">
        <Icon>
          <circle cx="4" cy="5.500" r="2" strokeWidth="1.500" />
          <path d="M10 7h4v4q0 2.500-3 3.500q1-1.500.5-3H10z" fill="currentColor" stroke="none" />
        </Icon>
      </button>
      <button type="button" aria-label="语音">
        <Icon className="size-4 stroke-[1.600]" d="M2.500 7Q3 12 8 12T13.500 7M6 15H10">
          <rect x="5" y="0" width="6" height="10" rx="3" fill="currentColor" stroke="none" />
        </Icon>
      </button>
      <button type="button" aria-label="软键盘">
        <Icon>
          <rect x="0.500" y="2" width="15" height="12" rx="1.500" fill="currentColor" stroke="none" />
          <path d="M2.500 4h2v2h-2zM5.500 4h2v2h-2zM8.500 4h2v2h-2zM11.500 4h2v2h-2zM2.500 7h2v2h-2zM5.500 7h2v2h-2zM8.500 7h2v2h-2zM11.500 7h2v2h-2zM2.500 10.500h3v2h-3zM6.500 10.500h7v2h-7z" fill="#fff" stroke="none" />
        </Icon>
      </button>
      <button type="button" aria-label="工具箱">
        <Icon>
          <path d="M2 2h5v5H2zM2 9.500h5v5H2zM9.500 9.500h5v5H9.500z" fill="currentColor" />
          <path d="M10 2.500H14V6.500H10z" strokeWidth="1.800" />
        </Icon>
      </button>
    </div>
  );
}

function LevelMeter() {
  return (
    <div className="absolute top-[854px] right-0 z-20 flex h-[59px] w-2.5 flex-col items-center gap-px rounded-l-sm border border-r-0 border-[#2b3038] bg-[#555c68] pt-1.5">
      {Array.from({ length: 23 }, (_, i) => (
        <span key={i} className={clsx('h-px w-1 shrink-0', i < 7 ? 'bg-[#2b3038]' : i < 12 ? 'bg-[#e6cf5a]' : i < 18 ? 'bg-[#a8e08c]' : 'bg-[#5fe0c4]')} />
      ))}
    </div>
  );
}

function SiteMark() {
  return (
    <div className="pointer-events-none absolute right-3 bottom-1.5 z-20 flex items-end opacity-90">
      <svg viewBox="0 0 44 44" className="h-11 w-11" aria-hidden="true">
        <path d="M43 2C24 0 4 8 1 23C-1 31 6 34 11 33C5 29 7 21 14 16C22 9 32 6 43 2z" fill="#4a9bdc" />
        <path d="M20 18C28 13 40 15 41 22C42 32 22 44 4 41C18 39 30 33 30 25C30 20 25 18 20 18z" fill="#5fb873" />
        <path d="M25 11C14 16 8 24 13 28C18 31 26 26 27 21C23 24 17 24 17 20C17 17 20 14 25 11z" fill="#2f7fc8" />
        <path d="M4 41C16 41 28 37 34 31C28 39 16 44 4 41z" fill="#e0d84a" />
      </svg>
      <div className="flex flex-col">
        <span className={clsx('text-[21px] leading-6 font-bold text-[#5a9bd8]', CJK_FONT)}>极光下载站</span>
        <span className="font-['Liberation_Sans',sans-serif] text-[15px] leading-[22px] font-bold text-[#6dbb80]">www.xz7.com</span>
      </div>
    </div>
  );
}

export default function App() {
  return (
    <div className={clsx('relative flex h-screen flex-col overflow-hidden bg-[#f5f7fa] text-xs', UI_FONT)}>
      <TitleBar />
      <MenuBar />
      <Ribbon />
      <div className="flex min-h-0 flex-1">
        <VerticalRuler />
        <main className="flex min-w-0 flex-1 flex-col overflow-hidden">
          <HorizontalRuler />
          <div className="flex justify-center pt-[31px] pl-[7px]">
            <Page />
          </div>
        </main>
        <ScrollBar />
        <StylePanel />
        <Rail />
      </div>
      <StatusBar />
      <InputMethodBar />
      <LevelMeter />
      <SiteMark />
    </div>
  );
}
